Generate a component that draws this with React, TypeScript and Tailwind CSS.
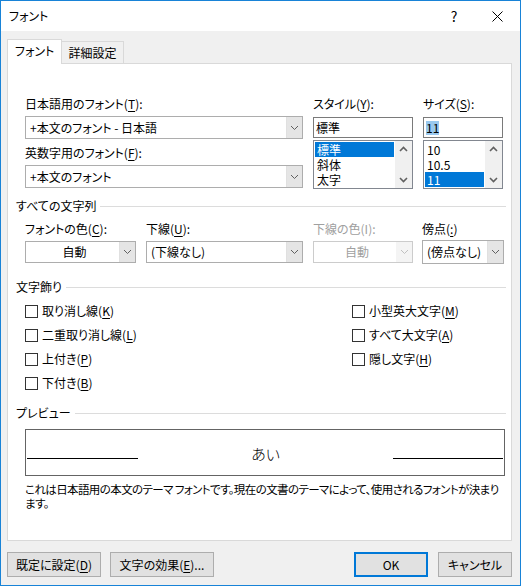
import React from "react";

const FONT = "font-['Noto_Sans_CJK_JP','Noto_Sans',sans-serif] [font-feature-settings:'palt']";

function Chevron({ disabled }: { disabled?: boolean }) {
  return (
    <svg width="9" height="6" viewBox="0 0 9 6">
      <path d="M1 1 L4.5 4.5 L8 1" fill="none" stroke={disabled ? "#c0c0c0" : "#606060"} strokeWidth="1" />
    </svg>
  );
}

function ScrollArrow({ up }: { up?: boolean }) {
  return (
    <svg width="9" height="6" viewBox="0 0 9 6">
      <path
        d={up ? "M1 5 L4.5 1.5 L8 5" : "M1 1 L4.5 4.5 L8 1"}
        fill="none"
        stroke="#606060"
        strokeWidth="1.6"
      />
    </svg>
  );
}

function U({ children }: { children: React.ReactNode }) {
  return <span className="underline underline-offset-2">{children}</span>;
}

function Combo({
  cls,
  text,
  center,
  disabled,
}: {
  cls: string;
  text: string;
  center?: boolean;
  disabled?: boolean;
}) {
  return (
    <div
      className={
        "flex bg-white border " +
        (disabled ? "border-[#cccccc] text-[#a0a0a0] " : "border-[#adadad] text-black ") +
        cls
      }
    >
      <div className={"flex-1 flex items-center pl-[4px] " + (center ? "justify-center" : "")}>{text}</div>
      <div
        className={
          "w-[16px] flex items-center justify-center " +
          (disabled ? "bg-[#f4f4f4]" : "bg-[#e5e5e5] border-l border-[#e0e0e0]")
        }
      >
        <Chevron disabled={disabled} />
      </div>
    </div>
  );
}

function ListBox({ items, sel }: { items: string[]; sel: number }) {
  return (
    <div className="mt-[2px] h-[49px] border border-[#828790] bg-white flex">
      <div className="flex-1 p-[1px] flex flex-col">
        {items.map((it, i) => (
          <div
            key={it}
            className={
              "h-[15px] leading-[15px] pl-[2px] " + (i === sel ? "bg-[#0078d7] text-white" : "text-black")
            }
          >
            {it}
          </div>
        ))}
      </div>
      <div className="w-[17px] bg-[#f0f0f0] flex flex-col items-center justify-between py-[5px]">
        <ScrollArrow up />
        <ScrollArrow />
      </div>
    </div>
  );
}

function Section({ title }: { title: string }) {
  return (
    <div className="flex items-center gap-[4px] h-[16px]">
      <span className="leading-[16px]">{title}</span>
      <div className="flex-1 h-px bg-[#dcdcdc]" />
    </div>
  );
}

function Check({ children }: { children: React.ReactNode }) {
  return (
    <div className="h-[24px] flex items-center">
      <div className="w-[13px] h-[13px] border border-[#333333] bg-white" />
      <span className="ml-[4px] leading-[16px]">{children}</span>
    </div>
  );
}

function Btn({ cls, children, primary }: { cls: string; children: React.ReactNode; primary?: boolean }) {
  return (
    <div
      className={
        "h-[25px] flex items-center justify-center bg-[#e1e1e1] " +
        (primary ? "border-2 border-[#0078d7] " : "border border-[#adadad] ") +
        cls
      }
    >
      {children}
    </div>
  );
}

export default function App() {
  return (
    <div className={"w-[521px] h-[586px] border border-[#1883d7] bg-[#f0f0f0] flex flex-col text-[12px] text-black " + FONT}>
      {/* title bar */}
      <div className="h-[30px] bg-white flex items-center pl-[8px] shrink-0">
        <span>フォント</span>
        <span className="ml-auto w-[14px] text-center text-[14px] mr-[30px]">?</span>
        <div className="w-[12px] flex items-center justify-center mr-[17px]">
          <svg width="11" height="11" viewBox="0 0 11 11">
            <path d="M0.5 0.5 L10.5 10.5 M10.5 0.5 L0.5 10.5" stroke="#000" strokeWidth="1" />
          </svg>
        </div>
      </div>

      <div className="flex-1 flex flex-col pl-[6px] pr-[8px] pt-[8px]">
        {/* tabs */}
        <div className="flex items-end h-[24px] relative z-10">
          <div className="w-[55px] h-[25px] bg-white border-l border-t border-r border-[#d9d9d9] flex items-center pl-[7px] -mb-px pb-[2px]">
            フォント
          </div>
          <div className="w-[62px] h-[22px] border-t border-r border-[#d9d9d9] flex items-center justify-center">
            詳細設定
          </div>
        </div>

        {/* panel */}
        <div className="h-[478px] bg-white border border-[#d9d9d9] pl-[8px] pr-[5px] pt-[32px] flex flex-col">
          {/* font row */}
          <div className="pl-[9px] flex">
            <div className="w-[278px] flex flex-col">
              <div className="h-[16px] leading-[16px]">
                日本語用のフォント(<U>T</U>):
              </div>
              <Combo cls="mt-[4px] h-[23px]" text="+本文のフォント - 日本語" />
              <div className="mt-[6px] h-[16px] leading-[16px]">
                英数字用のフォント(<U>F</U>):
              </div>
              <Combo cls="mt-[4px] h-[23px]" text="+本文のフォント" />
            </div>
            <div className="ml-[10px] w-[100px] flex flex-col">
              <div className="h-[16px] leading-[16px]">
                スタイル(<U>Y</U>):
              </div>
              <div className="mt-[5px] h-[21px] border border-[#7a7a7a] flex items-center pl-[2px] bg-white">
                標準
              </div>
              <ListBox items={["標準", "斜体", "太字"]} sel={0} />
            </div>
            <div className="ml-[10px] w-[80px] flex flex-col">
              <div className="h-[16px] leading-[16px]">
                サイズ(<U>S</U>):
              </div>
              <div className="mt-[5px] h-[21px] border border-[#7a7a7a] flex items-center pl-[2px] bg-white">
                <span className="bg-[#99c9ef] leading-[14px]">11</span>
              </div>
              <ListBox items={["10", "10.5", "11"]} sel={2} />
            </div>
          </div>

          {/* すべての文字列 */}
          <div className="mt-[9px]">
            <Section title="すべての文字列" />
          </div>
          <div className="pl-[9px] mt-[7px] flex">
            <div className="w-[111px] flex flex-col">
              <div className="h-[16px] leading-[16px]">
                フォントの色(<U>C</U>):
              </div>
              <Combo cls="mt-[4px] h-[22px]" text="自動" center />
            </div>
            <div className="ml-[10px] w-[157px] flex flex-col">
              <div className="h-[16px] leading-[16px]">
                下線(<U>U</U>):
              </div>
              <Combo cls="mt-[4px] h-[22px]" text="(下線なし)" />
            </div>
            <div className="ml-[10px] w-[100px] flex flex-col">
              <div className="h-[16px] leading-[16px] text-[#a0a0a0]">下線の色(I):</div>
              <Combo cls="mt-[4px] h-[22px]" text="自動" center disabled />
            </div>
            <div className="ml-[9px] w-[82px] flex flex-col">
              <div className="h-[16px] leading-[16px]">
                傍点(<U>:</U>)
              </div>
              <Combo cls="mt-[3px] h-[24px]" text="(傍点なし)" />
            </div>
          </div>

          {/* 文字飾り */}
          <div className="mt-[15px]">
            <Section title="文字飾り" />
          </div>
          <div className="pl-[9px] mt-[4px] flex">
            <div className="w-[327px] flex flex-col">
              <Check>
                取り消し線(<U>K</U>)
              </Check>
              <Check>
                二重取り消し線(<U>L</U>)
              </Check>
              <Check>
                上付き(<U>P</U>)
              </Check>
              <Check>
                下付き(<U>B</U>)
              </Check>
            </div>
            <div className="flex flex-col">
              <Check>
                小型英大文字(<U>M</U>)
              </Check>
              <Check>
                すべて大文字(<U>A</U>)
              </Check>
              <Check>
                隠し文字(<U>H</U>)
              </Check>
            </div>
          </div>

          {/* プレビュー */}
          <div className="mt-[10px]">
            <Section title="プレビュー" />
          </div>
          <div className="pl-[9px] mt-[8px]">
            <div className="w-[480px] h-[47px] border border-[#646464] flex items-end justify-between pb-[16px] px-[1px]">
              <div className="w-[111px] h-px bg-black" />
              <span className="text-[15px] leading-[16px] -mb-[3px] font-light font-['Noto_Sans_CJK_JP',sans-serif]">あい</span>
              <div className="w-[110px] h-px bg-black" />
            </div>
            <div className="mt-[6px] leading-[14px] w-[480px] text-[11.5px] tracking-[-0.6px]">
              <div className="whitespace-nowrap">
                これは日本語用の本文のテーマ フォントです。現在の文書のテーマによって、使用されるフォントが決まり
              </div>
              <div>ます。</div>
            </div>
          </div>
        </div>

        {/* buttons */}
        <div className="mt-[11px] flex">
          <Btn cls="w-[94px]">
            既定に設定(<U>D</U>)
          </Btn>
          <Btn cls="ml-[9px] w-[104px]">
            文字の効果(<U>E</U>)...
          </Btn>
          <Btn cls="ml-auto w-[74px]" primary>
            OK
          </Btn>
          <Btn cls="ml-[10px] w-[74px]">キャンセル</Btn>
        </div>
      </div>
    </div>
  );
}
